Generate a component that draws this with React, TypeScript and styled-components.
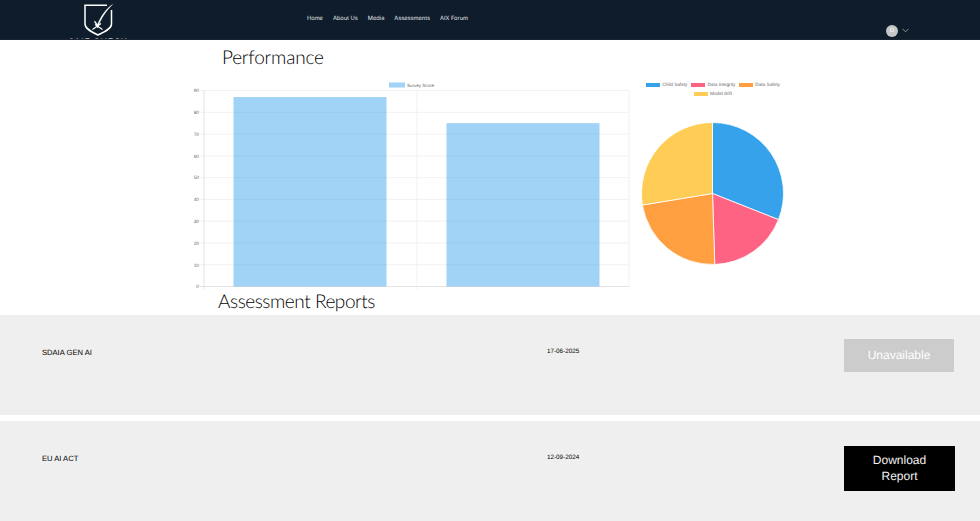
import styled, { createGlobalStyle } from 'styled-components';

const GlobalStyle = createGlobalStyle`
    html, body {
        margin: 0;
        padding: 0;
        height: 100%;
        overflow: hidden;
        background: #fff;
    }
    body {
        font-family: 'Liberation Sans', Arial, sans-serif;
        text-rendering: geometricPrecision;
    }
`;

const navItems = ['Home', 'About Us', 'Media', 'Assessments', 'AIX Forum'];
const ticks = [0, 10, 20, 30, 40, 50, 60, 70, 80, 90];
const scores = [
    { x: 233.5, value: 87 },
    { x: 446.5, value: 75 },
];
const slices = [
    { name: 'Child Safety', value: 31, color: '#36a2eb' },
    { name: 'Data Integrity', value: 18.5, color: '#ff6384' },
    { name: 'Data Safety', value: 22.9, color: '#ff9f40' },
    { name: 'Model drift', value: 27.6, color: '#ffcd56' },
];
const reports = [
    { name: 'SDAIA GEN AI', date: '17-06-2025', available: false },
    { name: 'EU AI ACT', date: '12-09-2024', available: true },
];

// chart coordinates are relative to the svg, which starts at x=185 / y=78
const BAR_LEFT = 19;
const BAR_RIGHT = 444;
const BAR_BOTTOM = 208.5;
const UNIT = 196 / 90;
const BAR_FILL = 'rgba(54, 162, 235, 0.47)';

const BarChart = () => (
    <BarSvg viewBox="0 0 450 214" width={450} height={214}>
        <rect x={204} y={4.5} width={16} height={5} fill={BAR_FILL} />
        <text x={222} y={8.8} fontSize={4.5} fill="#666">
            Survey Score
        </text>
        {ticks.map((tick) => {
            const y = BAR_BOTTOM - tick * UNIT;
            return (
                <g key={tick}>
                    <line x1={BAR_LEFT - 4} x2={BAR_RIGHT} y1={y} y2={y} stroke={tick === 0 ? '#dcdcdc' : '#eeeeee'} strokeWidth={0.8} />
                    <text x={BAR_LEFT - 5} y={y + 1.8} fontSize={4.8} fill="#666" textAnchor="end">
                        {tick}
                    </text>
                </g>
            );
        })}
        <line x1={BAR_LEFT} x2={BAR_LEFT} y1={12.5} y2={BAR_BOTTOM + 3} stroke="#dcdcdc" strokeWidth={0.8} />
        <line x1={232} x2={232} y1={12.5} y2={BAR_BOTTOM + 3} stroke="#eeeeee" strokeWidth={0.8} />
        <line x1={BAR_RIGHT} x2={BAR_RIGHT} y1={12.5} y2={BAR_BOTTOM + 3} stroke="#eeeeee" strokeWidth={0.8} />
        {scores.map((score) => (
            <rect
                key={score.x}
                x={score.x - 185}
                y={BAR_BOTTOM - score.value * UNIT}
                width={153}
                height={score.value * UNIT}
                fill={BAR_FILL}
            />
        ))}
    </BarSvg>
);

const piePath = (start: number, end: number) => {
    const cx = 72.5;
    const cy = 114.5;
    const r = 71;
    const point = (turn: number) => {
        const a = turn * 2 * Math.PI;
        return `${cx + r * Math.sin(a)} ${cy - r * Math.cos(a)}`;
    };
    return `M${cx} ${cy} L${point(start)} A${r} ${r} 0 ${end - start > 0.5 ? 1 : 0} 1 ${point(end)} Z`;
};

const PieChart = () => {
    let turn = 0;
    return (
        <PieSvg viewBox="0 0 150 190" width={150} height={190}>
            {slices.map((slice) => {
                const start = turn;
                turn += slice.value / 100;
                return <path key={slice.name} d={piePath(start, turn)} fill={slice.color} stroke="#fff" strokeWidth={0.8} />;
            })}
        </PieSvg>
    );
};

const App = () => (
    <>
        <GlobalStyle />
        <Header>
            <LogoBlock>
                <LogoMark width="29" height="32" viewBox="0 0 29 32" fill="none" stroke="#fff">
                    <path d="M23 1.2 H1 V20 C1 25 8 28 14 31 C20 28 27.5 25 27.5 20 V6" strokeWidth="1.5" />
                    <path d="M28.5 0.5 C22 5 17 12 13.5 20.5 L11 17 L10.3 17.6 L13.7 24 C16.5 15 21.5 7.5 28.5 0.5 Z" fill="#fff" stroke="#fff" strokeWidth="0.4" />
                    <path d="M8.5 25.5 L17 19.5 M11 20.5 L18.5 25.5" strokeWidth="1.1" />
                </LogoMark>
                <LogoText>SAIF CHECK</LogoText>
            </LogoBlock>
            <Nav>
                {navItems.map((item) => (
                    <NavLink key={item}>{item}</NavLink>
                ))}
            </Nav>
            <Account>
                <Avatar>D</Avatar>
                <svg width="7" height="5" viewBox="0 0 7 5" fill="none" stroke="#a9b0b8" strokeWidth="0.8">
                    <path d="M0.5 0.8 L3.5 3.8 L6.5 0.8" />
                </svg>
            </Account>
        </Header>
        <PerformanceTitle>Performance</PerformanceTitle>
        <Charts>
            <BarChart />
            <PieColumn>
                <PieLegend>
                    {slices.map((slice) => (
                        <LegendItem key={slice.name}>
                            <Swatch $color={slice.color} />
                            {slice.name}
                        </LegendItem>
                    ))}
                </PieLegend>
                <PieChart />
            </PieColumn>
        </Charts>
        <ReportsTitle>Assessment Reports</ReportsTitle>
        <Reports>
            {reports.map((report) => (
                <ReportRow key={report.name}>
                    <ReportName>{report.name}</ReportName>
                    <ReportDate>{report.date}</ReportDate>
                    <ReportButton $available={report.available}>
                        {report.available ? 'Download Report' : 'Unavailable'}
                    </ReportButton>
                </ReportRow>
            ))}
        </Reports>
    </>
);

export default App;

const Header = styled.header`
    display: flex;
    height: 39px;
    background: #0e1c2b;
    border-bottom: 1px solid #1a2230;
    box-sizing: content-box;
    overflow: hidden;
    color: #fff;
`;

const LogoBlock = styled.div`
    display: flex;
    flex-direction: column;
    align-items: center;
    flex: none;
    width: 62px;
    margin-left: 67px;
    padding-top: 4px;
`;

const LogoMark = styled.svg`
    display: block;
    flex: none;
`;

const LogoText = styled.div`
    flex: none;
    margin-top: 1px;
    font-size: 9px;
    font-family: 'Lato', sans-serif;
    font-weight: 400;
    letter-spacing: 0.8px;
    white-space: nowrap;
    line-height: 10px;
`;

const Nav = styled.nav`
    display: flex;
    gap: 10px;
    margin-left: 178px;
    padding-top: 15px;
`;

const NavLink = styled.span`
    font-family: 'Inter', sans-serif;
    font-size: 5.7px;
    line-height: 8px;
    color: #e6e8ea;
    white-space: nowrap;
`;

const Account = styled.div`
    display: flex;
    align-items: center;
    gap: 4px;
    margin-left: auto;
    margin-right: 71px;
    padding-top: 24px;
    height: 13px;
`;

const Avatar = styled.div`
    display: flex;
    align-items: center;
    justify-content: center;
    width: 12px;
    height: 12px;
    border-radius: 50%;
    background: #c6c6c6;
    color: #fff;
    font-size: 6px;
    line-height: 12px;
`;

const PerformanceTitle = styled.h1`
    margin: 5px 0 0 222px;
    font-family: 'Lato', sans-serif;
    font-weight: 300;
    font-size: 19px;
    letter-spacing: -0.22px;
    line-height: 26px;
    color: #000;
`;

const Charts = styled.section`
    display: flex;
    align-items: flex-start;
    gap: 5px;
    margin: 7px 0 0 185px;
    height: 214px;
`;

const BarSvg = styled.svg`
    display: block;
    flex: none;
    font-family: 'Liberation Sans', Arial, sans-serif;
`;

const PieColumn = styled.div`
    display: flex;
    flex-direction: column;
    width: 150px;
`;

const PieLegend = styled.div`
    display: flex;
    flex-wrap: wrap;
    justify-content: center;
    gap: 3px 4px;
    width: 146px;
    margin-top: 4px;
`;

const LegendItem = styled.span`
    display: flex;
    align-items: center;
    gap: 2px;
    font-size: 4.7px;
    line-height: 6px;
    color: #666;
    white-space: nowrap;
`;

const Swatch = styled.i<{ $color: string }>`
    display: block;
    width: 14px;
    height: 4px;
    background: ${(props) => props.$color};
`;

const PieSvg = styled.svg`
    display: block;
    margin-top: -18.5px;
`;

const ReportsTitle = styled.h2`
    margin: 0 0 0 218px;
    height: 23px;
    font-family: 'Lato', sans-serif;
    font-weight: 300;
    font-size: 19px;
    letter-spacing: -0.45px;
    line-height: 19px;
    color: #000;
    white-space: nowrap;
`;

const Reports = styled.section`
    display: flex;
    flex-direction: column;
    gap: 6px;
`;

const ReportRow = styled.div`
    display: grid;
    grid-template-columns: 505px 297px 111px;
    align-items: start;
    height: 100px;
    padding-left: 42px;
    background: #efefef;
`;

const ReportName = styled.div`
    margin-top: 33px;
    font-size: 7.6px;
    line-height: 10px;
    color: #000;
`;

const ReportDate = styled.div`
    margin-top: 32px;
    font-size: 6.3px;
    line-height: 9px;
    color: #000;
`;

const ReportButton = styled.div<{ $available: boolean }>`
    display: flex;
    align-items: center;
    justify-content: center;
    box-sizing: border-box;
    margin-top: ${(props) => (props.$available ? 25 : 24)}px;
    width: ${(props) => (props.$available ? 111 : 110)}px;
    height: ${(props) => (props.$available ? 45 : 33)}px;
    padding: 0 20px 2px;
    text-align: center;
    font-size: 12px;
    line-height: 16px;
    color: ${(props) => (props.$available ? '#f2f2f2' : '#fff')};
    background: ${(props) => (props.$available ? '#000' : '#cccccc')};
`;
